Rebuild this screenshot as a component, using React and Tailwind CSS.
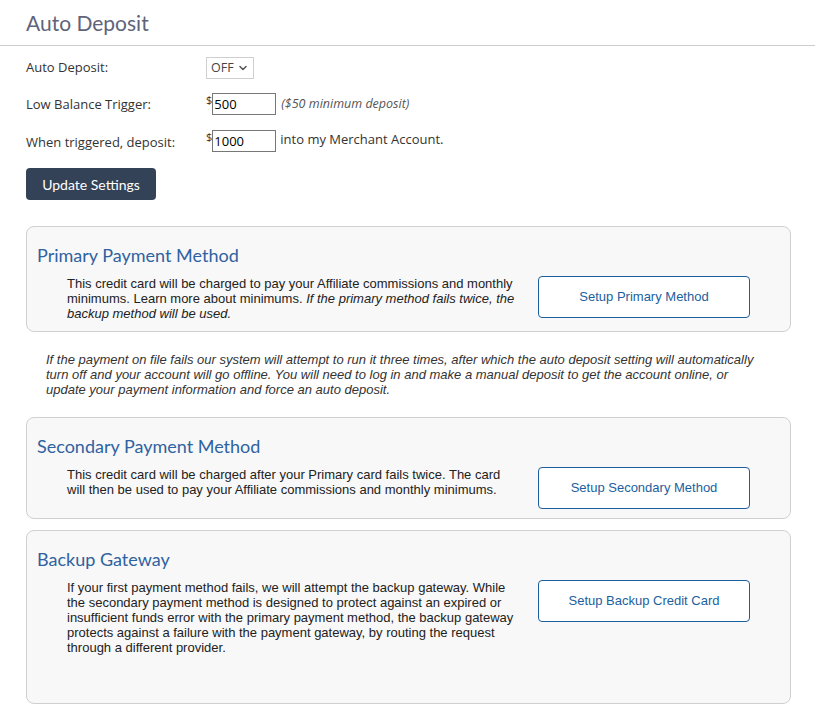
import { ChevronDown } from "lucide-react"

const heading = { fontFamily: "Lato, 'Open Sans', sans-serif" }

function MethodCard({ title, children, button, tall, first }) {
  return (
    <section
      className={`ml-[26px] mr-[24px] rounded-lg border border-[#d0d0d0] bg-[#f8f8f8] pl-[10px] pr-[40px] pt-[16px] ${tall ? "pb-[48px]" : first ? "pb-[10px]" : "pb-[9px]"}`}
    >
      <h2 className="text-[18px] leading-[24px] text-[#2f62a0]" style={heading}>
        {title}
      </h2>
      <div className="mt-[9px] flex items-start justify-between">
        <p className="ml-[30px] w-[450px] text-[13px] leading-[15px] text-[#222] [font-family:'Liberation_Sans',Arial,sans-serif]">
          {children}
        </p>
        <button className="h-[42px] w-[212px] rounded border border-[#1b5f9e] bg-white text-[13px] text-[#1b5f9e] [font-family:'Liberation_Sans',Arial,sans-serif]">
          {button}
        </button>
      </div>
    </section>
  )
}

export default function App() {
  return (
    <div className="min-h-[711px] bg-white pb-4 [font-family:'Open_Sans',sans-serif]">
      <header className="flex h-[46px] items-center border-b border-[#cccccc] px-[26px]">
        <h1 className="text-[21px] text-[#60647a]" style={heading}>
          Auto Deposit
        </h1>
      </header>

      <div className="px-[26px] pt-[11px] text-[13px] text-[#333]">
        <div className="flex h-[22px] items-center">
          <label className="w-[180px]">Auto Deposit:</label>
          <div className="flex h-[22px] w-[48px] items-center gap-[3px] border border-[#cfcfcf] pl-[4px] text-[12.5px] text-[#444]">
            OFF <ChevronDown size={12} strokeWidth={3} className="text-[#555]" />
          </div>
        </div>

        <div className="mt-[14px] flex h-[22px] items-center">
          <label className="w-[180px] pt-[2px]">Low Balance Trigger:</label>
          <span className="self-start text-[11px] leading-[14px]">$</span>
          <input
            defaultValue="500"
            className="h-[22px] w-[64px] border border-[#777] px-[1px] text-[13px] text-black outline-none"
          />
          <span className="ml-[5px] text-[12.5px] italic text-[#555]">($50 minimum deposit)</span>
        </div>

        <div className="mt-[15px] flex h-[22px] items-center">
          <label className="w-[180px] pt-[4px]">When triggered, deposit:</label>
          <span className="self-start text-[11px] leading-[14px]">$</span>
          <input
            defaultValue="1000"
            className="h-[22px] w-[64px] border border-[#777] px-[1px] text-[13px] text-black outline-none"
          />
          <span className="ml-[4px] pb-[2px]">into my Merchant Account.</span>
        </div>

        <button
          className="mt-[16px] h-[32px] w-[130px] rounded bg-[#344257] text-[14px] text-white"
          style={heading}
        >
          Update Settings
        </button>
      </div>

      <div className="mt-[26px]">
        <MethodCard title="Primary Payment Method" button="Setup Primary Method" first>
          This credit card will be charged to pay your Affiliate commissions and monthly minimums. Learn more about
          minimums. <i>If the primary method fails twice, the backup method will be used.</i>
        </MethodCard>

        <p className="mx-[46px] mt-[20px] mb-[20px] w-[712px] text-[13px] leading-[15px] italic text-[#333] [font-family:'Liberation_Sans',Arial,sans-serif]">
          If the payment on file fails our system will attempt to run it three times, after which the auto deposit
          setting will automatically turn off and your account will go offline. You will need to log in and make a
          manual deposit to get the account online, or update your payment information and force an auto deposit.
        </p>

        <MethodCard title="Secondary Payment Method" button="Setup Secondary Method">
          This credit card will be charged after your Primary card fails twice. The card will then be used to pay your
          Affiliate commissions and monthly minimums.
        </MethodCard>

        <div className="h-[11px]" />

        <MethodCard title="Backup Gateway" button="Setup Backup Credit Card" tall>
          If your first payment method fails, we will attempt the backup gateway. While the secondary payment method is
          designed to protect against an expired or insufficient funds error with the primary payment method, the backup
          gateway protects against a failure with the payment gateway, by routing the request through a different
          provider.
        </MethodCard>
      </div>
    </div>
  )
}
